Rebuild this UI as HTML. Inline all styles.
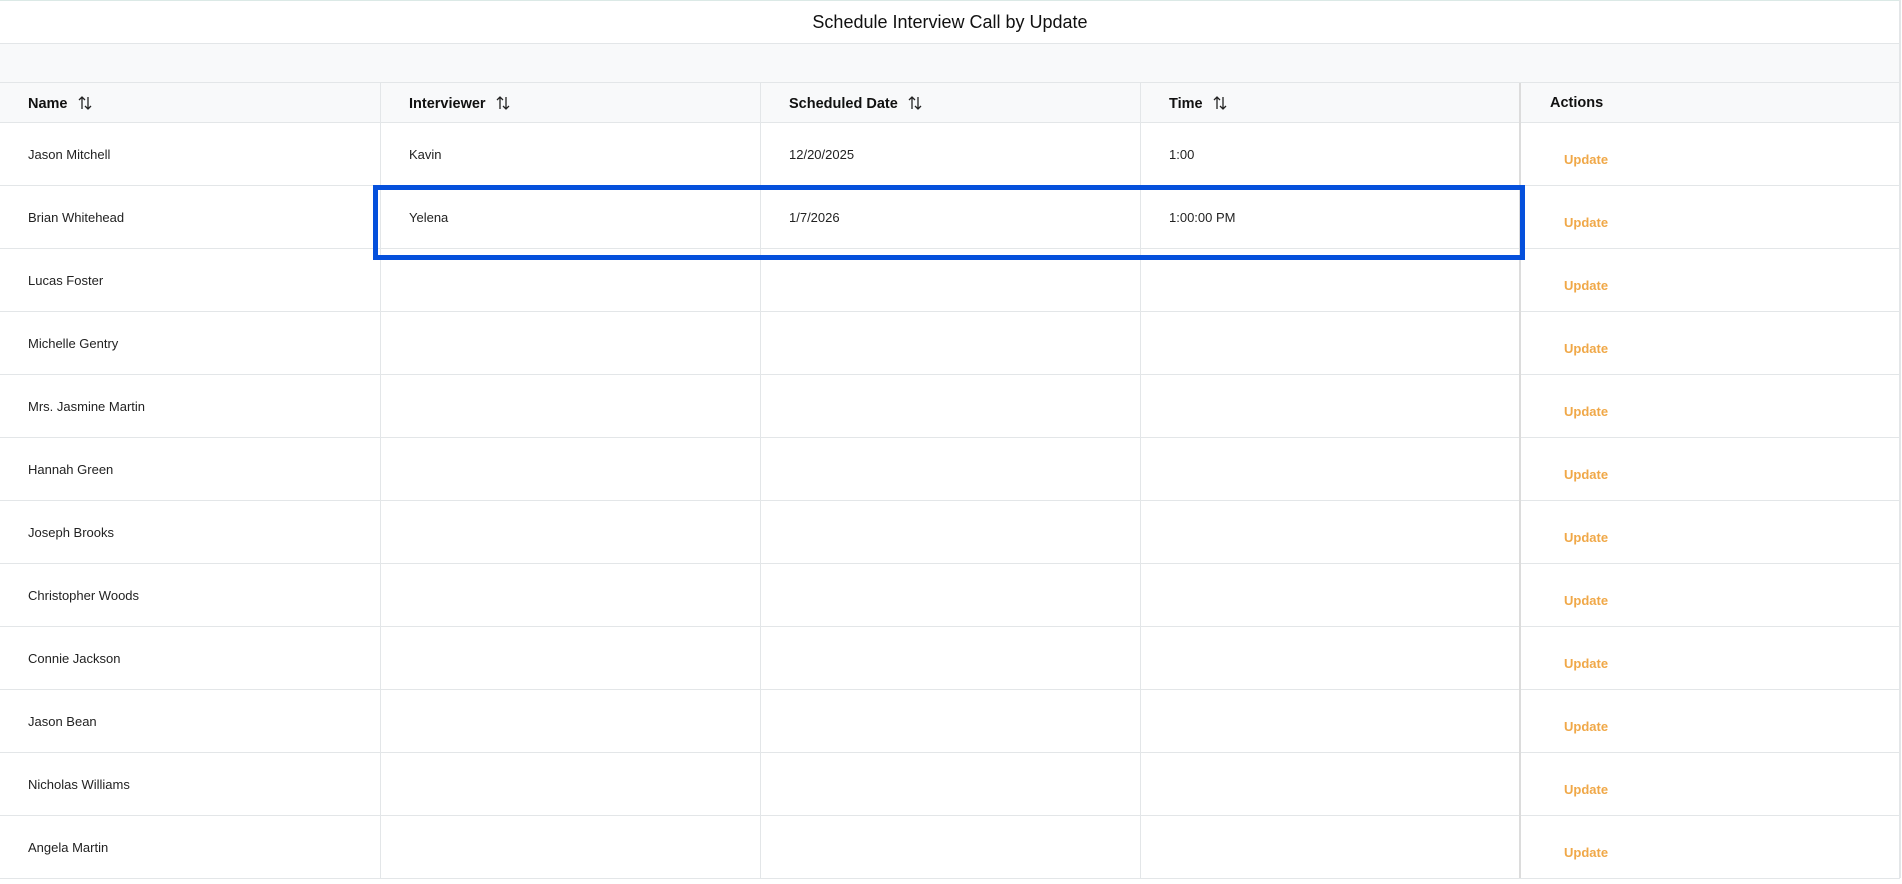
<!DOCTYPE html>
<html><head><style>
*{margin:0;padding:0;box-sizing:border-box}
body{width:1902px;height:878px;overflow:hidden;background:#fff;font-family:"Liberation Sans",sans-serif;color:#1a1a1a;position:relative}
.frame{position:absolute;left:0;top:0;width:1901px;height:878px;border:1px solid #dbe9e6;border-bottom:none;border-left:none}
.title{position:absolute;left:0;top:0;width:1900px;height:44px;border-bottom:1px solid #e3e6e8;text-align:center;line-height:44px;font-size:18px;color:#111}
.band{position:absolute;left:0;top:44px;width:1900px;height:39px;background:#f8f9fa;border-bottom:1px solid #e3e6e8}
.head{position:absolute;left:0;top:83px;width:1900px;height:40px;background:#f8f9fa;border-bottom:1px solid #e3e6e8}
.h{position:absolute;top:84px;height:40px;line-height:40px;font-weight:bold;font-size:14.5px;color:#111}
.h svg{vertical-align:middle;margin-left:9px;margin-top:-3px}
.vl{position:absolute;top:83px;bottom:0;width:1px;background:#e3e6e8}
.row{position:absolute;left:0;width:1900px;height:63px;border-bottom:1px solid #e3e6e8}
.c{position:absolute;top:1px;line-height:62px;font-size:13px;color:#222}
.u{position:absolute;left:1564px;top:6px;line-height:62px;font-size:13px;font-weight:bold;color:#f0a848}
.box{position:absolute;left:373px;top:185px;width:1152px;height:75px;border:5px solid #0550dc}
</style></head><body>
<div class="frame"></div>
<div class="title">Schedule Interview Call by Update</div>
<div class="band"></div>
<div class="head"></div>
<div class="h" style="left:28px">Name<svg width="16" height="16" viewBox="0 0 16 16" fill="none" stroke="#222" stroke-width="1.3"><path d="M5 14V2M2 5l3-3 3 3M11 2v12M8 11l3 3 3-3"/></svg></div>
<div class="h" style="left:409px">Interviewer<svg width="16" height="16" viewBox="0 0 16 16" fill="none" stroke="#222" stroke-width="1.3"><path d="M5 14V2M2 5l3-3 3 3M11 2v12M8 11l3 3 3-3"/></svg></div>
<div class="h" style="left:789px">Scheduled Date<svg width="16" height="16" viewBox="0 0 16 16" fill="none" stroke="#222" stroke-width="1.3"><path d="M5 14V2M2 5l3-3 3 3M11 2v12M8 11l3 3 3-3"/></svg></div>
<div class="h" style="left:1169px">Time<svg width="16" height="16" viewBox="0 0 16 16" fill="none" stroke="#222" stroke-width="1.3"><path d="M5 14V2M2 5l3-3 3 3M11 2v12M8 11l3 3 3-3"/></svg></div>
<div class="h" style="left:1550px;top:83px">Actions</div>

<div class="row" style="top:123px"><span class="c" style="left:28px">Jason Mitchell</span><span class="c" style="left:409px">Kavin</span><span class="c" style="left:789px">12/20/2025</span><span class="c" style="left:1169px">1:00</span><span class="u">Update</span></div>
<div class="row" style="top:186px"><span class="c" style="left:28px">Brian Whitehead</span><span class="c" style="left:409px">Yelena</span><span class="c" style="left:789px">1/7/2026</span><span class="c" style="left:1169px">1:00:00 PM</span><span class="u">Update</span></div>
<div class="row" style="top:249px"><span class="c" style="left:28px">Lucas Foster</span><span class="u">Update</span></div>
<div class="row" style="top:312px"><span class="c" style="left:28px">Michelle Gentry</span><span class="u">Update</span></div>
<div class="row" style="top:375px"><span class="c" style="left:28px">Mrs. Jasmine Martin</span><span class="u">Update</span></div>
<div class="row" style="top:438px"><span class="c" style="left:28px">Hannah Green</span><span class="u">Update</span></div>
<div class="row" style="top:501px"><span class="c" style="left:28px">Joseph Brooks</span><span class="u">Update</span></div>
<div class="row" style="top:564px"><span class="c" style="left:28px">Christopher Woods</span><span class="u">Update</span></div>
<div class="row" style="top:627px"><span class="c" style="left:28px">Connie Jackson</span><span class="u">Update</span></div>
<div class="row" style="top:690px"><span class="c" style="left:28px">Jason Bean</span><span class="u">Update</span></div>
<div class="row" style="top:753px"><span class="c" style="left:28px">Nicholas Williams</span><span class="u">Update</span></div>
<div class="row" style="top:816px"><span class="c" style="left:28px">Angela Martin</span><span class="u">Update</span></div>

<div class="vl" style="left:380px"></div>
<div class="vl" style="left:760px"></div>
<div class="vl" style="left:1140px"></div>
<div class="vl" style="left:1519px;width:2px;background:#dcdcdc"></div>
<div class="vl" style="left:1899px;top:0;width:2px;background:#e3e6e8"></div>
<div class="box"></div>
</body></html>
